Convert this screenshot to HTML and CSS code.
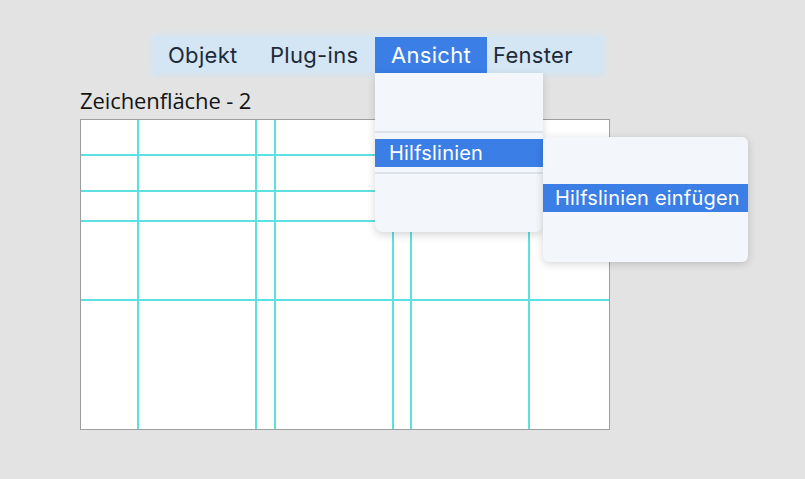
FILE: index.html
```html
<!DOCTYPE html>
<html lang="de">
<head>
<meta charset="utf-8">
<link rel="stylesheet" href="styles.css">
</head>
<body>
<div class="page">
  <nav class="menubar">
    <div class="menu-item w-objekt">Objekt</div>
    <div class="menu-item w-plugins">Plug-ins</div>
    <div class="menu-item w-ansicht active">Ansicht
      <div class="dropdown">
        <div class="blank-top"></div>
        <div class="sep"></div>
        <div class="entry selected">Hilfslinien</div>
        <div class="sep sep-low"></div>
        <div class="submenu">
          <div class="sub-blank"></div>
          <div class="entry selected sub-entry">Hilfslinien einfügen</div>
        </div>
      </div>
    </div>
    <div class="menu-item w-fenster">Fenster</div>
  </nav>
  <div class="artboard-title">Zeichenfläche - 2</div>
  <div class="artboard">
    <div class="guide v" style="left:56px"></div>
    <div class="guide v" style="left:174px"></div>
    <div class="guide v" style="left:193px"></div>
    <div class="guide v" style="left:311px"></div>
    <div class="guide v" style="left:329px"></div>
    <div class="guide v" style="left:447px"></div>
    <div class="guide h" style="top:34px"></div>
    <div class="guide h" style="top:70px"></div>
    <div class="guide h" style="top:100px"></div>
    <div class="guide h" style="top:179px"></div>
  </div>
</div>
</body>
</html>
```

FILE: styles.css
```css
html, body {
  margin: 0;
  padding: 0;
  background: #e3e3e3;
}
.page {
  width: 805px;
  height: 479px;
  overflow: hidden;
  padding-top: 37px;
  box-sizing: border-box;
  font-family: Inter, "Liberation Sans", sans-serif;
}
.menubar {
  display: flex;
  margin-left: 154px;
  width: max-content;
  height: 36px;
  background: #d4e6f3;
  box-shadow: 0 0 6px 3px #d7e7f2, 0 2px 3px rgba(0,0,0,0.06);
  position: relative;
  z-index: 2;
}
.menu-item {
  position: relative;
  box-sizing: border-box;
  padding-left: 14px;
  height: 36px;
  line-height: 36px;
  font-size: 22px;
  letter-spacing: 0.3px;
  color: #1d2a3a;
  white-space: nowrap;
}
.w-objekt { width: 100px; }
.w-plugins { width: 121px; padding-left: 16px; }
.w-ansicht { width: 112px; padding-left: 16px; }
.w-fenster { width: 116px; padding-left: 6px; }
.menu-item.active {
  background: #3a7ee6;
  color: #ffffff;
}
.dropdown {
  position: absolute;
  top: 36px;
  left: 0;
  width: 168px;
  height: 159px;
  background: #f3f6fa;
  border-radius: 0 0 8px 8px;
  box-shadow: 0 3px 8px rgba(0,0,0,0.16);
  color: #ffffff;
  letter-spacing: 0;
}
.blank-top {
  height: 58px;
}
.sep {
  height: 2px;
  background: #dde2e9;
}
.sep-low {
  margin-top: 5px;
}
.entry {
  height: 28px;
  line-height: 28px;
  font-size: 20px;
  letter-spacing: 0.2px;
  padding-left: 14px;
  margin-top: 6px;
}
.entry.selected {
  background: #3a7ee6;
  color: #ffffff;
}
.submenu {
  position: absolute;
  left: 168px;
  top: 64px;
  width: 205px;
  height: 125px;
  background: #f3f6fa;
  border-radius: 6px;
  box-shadow: 0 2px 9px rgba(0,0,0,0.17);
}
.sub-blank {
  height: 47px;
}
.sub-entry {
  margin-top: 0;
  padding-left: 12px;
}
.artboard-title {
  margin: 14px 0 0 80px;
  font-family: "Open Sans", "Liberation Sans", sans-serif;
  font-size: 22px;
  line-height: 26px;
  color: #141414;
  height: 32px;
  letter-spacing: -0.1px;
}
.artboard {
  position: relative;
  margin-left: 80px;
  width: 528px;
  height: 309px;
  background: #ffffff;
  border: 1px solid #9e9e9e;
  z-index: 1;
}
.guide {
  position: absolute;
  background: #5fe0e0;
}
.guide.v {
  top: 0;
  bottom: 0;
  width: 2px;
}
.guide.h {
  left: 0;
  right: 0;
  height: 2px;
}
```
